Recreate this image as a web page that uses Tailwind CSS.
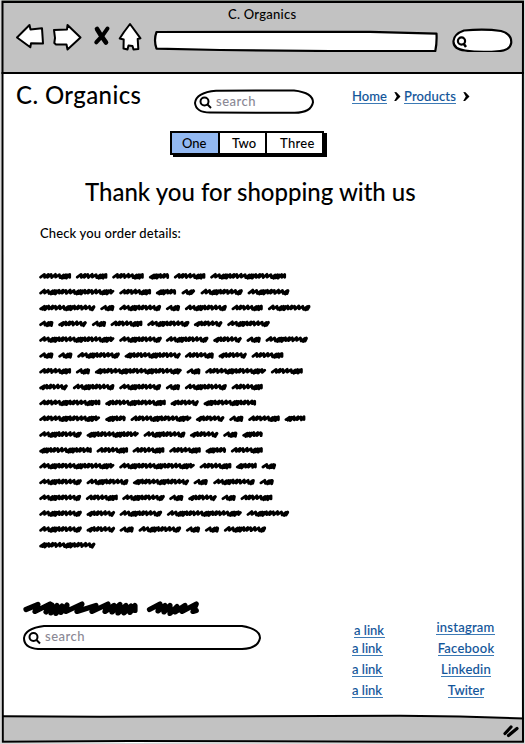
<!DOCTYPE html>
<html lang="en">
<head>
<meta charset="utf-8">
<title>C. Organics</title>
<script src="https://cdn.jsdelivr.net/npm/@tailwindcss/browser@4"></script>
</head>
<body class="bg-white">
<div class="relative flex flex-col w-[525px] h-[744px] overflow-hidden bg-white text-black font-['Lato','Open_Sans',sans-serif] font-medium text-[13px] leading-[18px]">

  <!-- browser chrome -->
  <header class="flex flex-col h-[74px] shrink-0 bg-[#c2c2c2] border-b-2 border-black">
    <div class="h-[22px] pt-[5px] pl-[228px] tracking-[0.25px]">C. Organics</div>
    <div class="flex items-start pl-[15px]">
      <svg class="w-[30px] h-[30px] shrink-0" viewBox="15 22 30 30" fill="#fff" stroke="#000" stroke-width="2" stroke-linejoin="round"><path d="M17 37.5 L29.5 25 L30.5 29.5 L42 28.3 L43 43.5 L31 43.3 L30.3 47.3 Z"/></svg>
      <svg class="w-[32px] h-[30px] ml-[6px] shrink-0" viewBox="51 22 32 30" fill="#fff" stroke="#000" stroke-width="2" stroke-linejoin="round"><path d="M54 30 L67 29.5 L67.500 25 L80.500 37.500 L67.500 49.500 L66.500 44.500 L56 44.500 L54.300 43 L55 38 Z"/></svg>
      <svg class="w-[20px] h-[30px] ml-[9px] shrink-0" viewBox="92 22 20 30" fill="none" stroke="#000" stroke-linejoin="round" stroke-linecap="round"><path d="M97 29 Q101 36 106 42.500" stroke-width="4.600"/><path d="M107.500 28.500 Q103 36 96.300 42.300" stroke-width="4"/></svg>
      <svg class="w-[26px] h-[30px] ml-[6px] shrink-0" viewBox="118 22 26 30" fill="#fff" stroke="#000" stroke-width="2" stroke-linejoin="round"><path d="M130 24 L140.500 38.300 L137.700 39 L138.300 49 L133.500 49.500 L132.500 46 L128.500 45.500 L127.500 49.500 L123.500 48.500 L123.700 39.500 L119.700 38.500 L124 32 Z"/></svg>
      <svg class="w-[290px] h-[30px] ml-[7px] shrink-0" viewBox="151 22 290 30" fill="#fff" stroke="#000" stroke-width="2.200" stroke-linejoin="round"><path d="M156.500 32 L370 31.800 L436.500 33.600 Q437 43 435.300 51 L330 51 L220 50 L156.500 48.700 Q153.500 40 156.500 32 Z"/></svg>
      <svg class="w-[64px] h-[30px] ml-[10px] shrink-0" viewBox="451 26 64 30" fill="#fff" stroke="#000" stroke-width="2.200"><g transform="translate(0 4)"><path d="M464 30.500 Q485 28.500 501 31 Q512 34 511.200 43 Q510 50 500 51 Q481 53 465 50.500 Q453 49 453.500 41 Q454 34 464 30.500 Z"/><circle cx="461.500" cy="41" r="3.600" fill="none" stroke-width="2.200"/><path d="M463.500 43.500 L466 47" stroke-width="2.500"/></g></svg>
    </div>
  </header>

  <main class="flex flex-col h-[642px] shrink-0">
    <!-- site header -->
    <div class="flex items-start h-[57px] shrink-0 pl-[16px]">
      <h1 class="w-[177px] pt-[7px] text-[24px] leading-[28px] tracking-[0.4px] whitespace-nowrap">C. Organics</h1>
      <div class="relative w-[122px] h-[27px] mt-[15px]">
        <svg class="absolute inset-0 w-[122px] h-[27px]" viewBox="193 89 122 27" fill="#fff" stroke="#000" stroke-width="2"><path d="M216 90.700 L294 90.400 Q313 92.500 313 102.300 Q311 113 294 112.800 L210 112.500 Q196 112.500 195 103 Q196 92.500 216 90.700 Z"/><circle cx="204.500" cy="101.500" r="4" fill="none" stroke-width="2"/><path d="M207.500 104.500 L211 108"/></svg>
        <span class="relative block pt-[3px] pl-[23px] tracking-[0.5px] text-[#8a8894]">search</span>
      </div>
      <nav class="flex items-start pt-[13px] pl-[37px] text-[#12559a] [-webkit-text-stroke:0.1px_currentColor]">
        <a class="block h-[17px] leading-[18px] border-b border-[#3c7ab5] w-[35px] whitespace-nowrap">Home</a>
        <svg class="w-[7px] h-[9px] mt-[5px] ml-[7px]" viewBox="0 0 7 9"><path d="M0.300 0 L2.500 0.200 L6.500 4.500 L2 9 L0.200 9 L2.800 4.500 Z"/></svg>
        <a class="block h-[17px] leading-[18px] border-b border-[#3c7ab5] w-[52px] ml-[3px] tracking-[0.15px] whitespace-nowrap">Products</a>
        <svg class="w-[7px] h-[9px] mt-[5px] ml-[7px]" viewBox="0 0 7 9"><path d="M0.300 0 L2.500 0.200 L6.500 4.500 L2 9 L0.200 9 L2.800 4.500 Z"/></svg>
      </nav>
    </div>

    <!-- button bar -->
    <div class="flex h-[24px] shrink-0 w-[154px] ml-[170px] border-2 border-black shadow-[3px_2px_0_#000] leading-[21px] whitespace-nowrap">
      <div class="w-[48px] pl-[10px] bg-[#93b9f2] border-r-2 border-black">One</div>
      <div class="w-[47px] pl-[12px] border-r-2 border-black">Two</div>
      <div class="pl-[13px] tracking-[0.3px]">Three</div>
    </div>

    <h2 class="mt-[22px] ml-[85px] text-[24px] leading-[30px] whitespace-nowrap">Thank you for shopping with us</h2>
    <p class="mt-[17px] ml-[40px] tracking-[0.14px] whitespace-nowrap">Check you order details:</p>

    <svg id="body-copy" class="w-[290px] h-[286px] mt-[26px] ml-[30px] shrink-0" viewBox="30 268 290 286" fill="none" stroke="#000" stroke-width="2.800" stroke-linecap="round" stroke-linejoin="round"></svg>

    <!-- site footer -->
    <div class="flex mt-[44px]">
      <div class="w-[262px] pl-[22px] shrink-0">
        <svg class="w-[178px] h-[20px]" viewBox="22 597.500 178 20" fill="none" stroke="#000" stroke-width="5.200" stroke-linecap="round" stroke-linejoin="round"><path d="M26 609 L38 604 L35 611 L50 603.500 L46 611.500 L52 604.500 L51 612.500 L57 605 L56 613 L62 605.500 L61 612 L67 604.500 L66 611 L82 603.500 L77 611 L96 605 L92 611 L108 603.500 L105 611 L114 605 L112 611.500 L120 604 L118 612.500 L126 605 L124 612.500 L131 605.500 L130 612 L135 605 L135 610"/><path d="M149.500 609 L160 603.500 L158 610.500 L165 605 L164 611.500 L170 605 L170 613 L177 606 L175 611.500 L185 605 L182 611 L196.300 603.500 L193 611 L196.300 610"/></svg>
        <div class="relative w-[240px] h-[27px] mt-[6px]">
          <svg class="absolute inset-0 w-[240px] h-[27px]" viewBox="22 624 240 27" fill="#fff" stroke="#000" stroke-width="2"><path d="M44 626 L242 626 Q260 629 260 638 Q258 648.500 242 649 L38 649 Q24 648 24 638 Q25 628.500 44 626 Z"/><circle cx="33.500" cy="637" r="4" fill="none"/><path d="M36.500 640 L40 643.500"/></svg>
          <span class="relative block pt-[3px] pl-[23px] tracking-[0.5px] text-[#8a8894]">search</span>
        </div>
      </div>
      <div class="flex flex-col pt-[23px] pl-[90px] w-[164px] shrink-0 items-start text-[#12559a] [-webkit-text-stroke:0.1px_currentColor]">
        <a class="block h-[17px] w-[31px] ml-[2px] border-b border-[#3c7ab5]">a link</a>
        <a class="block h-[17px] w-[31px] mt-[1px] border-b border-[#3c7ab5]">a link</a>
        <a class="block h-[17px] w-[31px] mt-[4px] border-b border-[#3c7ab5]">a link</a>
        <a class="block h-[17px] w-[31px] mt-[4px] border-b border-[#3c7ab5]">a link</a>
      </div>
      <div class="flex flex-col pt-[20px] w-[80px] shrink-0 items-center tracking-[0.25px] text-[#12559a] [-webkit-text-stroke:0.1px_currentColor]">
        <a class="block h-[17px] mr-[1px] border-b border-[#3c7ab5]">instagram</a>
        <a class="block h-[17px] mt-[4px] border-b border-[#3c7ab5]">Facebook</a>
        <a class="block h-[17px] mt-[4px] border-b border-[#3c7ab5]">Linkedin</a>
        <a class="block h-[17px] mt-[4px] border-b border-[#3c7ab5] tracking-[0px]">Twiter</a>
      </div>
    </div>
  </main>

  <!-- status bar -->
  <svg class="w-[525px] h-[28px] shrink-0" viewBox="0 716 525 28" overflow="visible"><path d="M3 716.300 L100 716.800 L380 715.800 L460 716.500 L524 718.500 L524 742 L3 742 Z" fill="#c2c2c2"/><path d="M3 716.300 L100 716.800 L400 715.800 L460 716.500 L524 718.500" fill="none" stroke="#000" stroke-width="2"/><path d="M505 733.500 L511 727 M508.500 735.500 L517 728.500" stroke="#000" stroke-width="3.200" stroke-linecap="round"/></svg>

  <!-- hand drawn window outline -->
  <svg class="absolute inset-0 w-[525px] h-[744px] pointer-events-none" viewBox="0 0 525 744" fill="none"><path d="M0 0 H525 V1 H0 Z" fill="#7c807c"/><path d="M0 0 H1.500 V744 H0 Z M524 0 H525 V744 H524 Z M0 743 H525 V744 H0 Z" fill="#d8d8d8"/><path d="M2.500 2 L523 2 L522.500 400 L523 741.800 L400 741.800 L130 741 L2.800 741.800 L2.500 400 Z" stroke="#000" stroke-width="2"/></svg>
</div>

<script>
// Word extents per line, in thirds of a pixel from the left margin.
const LINES = [
  [28,123,138,232,247,341,357,417,432,526,541,768],
  [28,253,268,363,378,438,455,495,512,638,653,778],
  [28,196,211,253,268,393,408,450,465,590,605,698,714,841],
  [28,70,85,170,186,228,242,337,352,478,492,577,592,719],
  [28,253,268,395,408,535,550,635,650,692,707,833],
  [28,70,85,127,142,269,284,452,465,551,566,650,665,760],
  [28,123,138,180,195,455,470,511,526,708,723,818],
  [28,113,129,253,268,393,408,450,465,590,605,698],
  [28,211,226,407,422,506,521,678],
  [28,210,226,287,302,484,498,583,598,640,655,749,764,826],
  [28,155,170,326,341,466,480,565,580,622,637,698],
  [28,185,200,294,308,403,418,512,527,588,603,698],
  [28,253,268,494,509,604,618,680,695,738],
  [28,155,170,295,309,477,491,533,550,674,689,731],
  [28,153,168,263,277,404,418,460,475,560,575,617,632,727],
  [28,155,170,255,269,396,411,635,650,777],
  [28,155,170,255,269,311,326,453,468,510,525,567,582,708],
  [28,196]
];
const STEPS = [2.8, 4.3, 3.9, 4.4, 2.1, 1.9, 2.4, 4];
const DIPS = [0, 0.3, -0.2, 0.5, 1.2, 0.6, 1.1, 0.1];
let d = '';
LINES.forEach((line, i) => {
  const y = 276.2 + i * 15.82;
  for (let w = 0; w < line.length; w += 2) {
    const a = 30 + line[w] / 3 + 1.3, b = 30 + line[w + 1] / 3 - 1.3;
    let x = a, k = Math.round((b - a) / 4);
    d += `M${a} ${y + 1}`;
    while (x < b - 2.5) {
      const e = DIPS[k % 8];
      d += `L${Math.min(x + 3.8, b).toFixed(1)} ${(y - 1.8 + e * 0.5).toFixed(1)}`;
      x += STEPS[k % 8];
      d += `L${Math.min(x, b).toFixed(1)} ${(y + 1.1 + e * 0.8).toFixed(1)}`;
      k++;
    }
    d += `L${b.toFixed(1)} ${y - 0.9}`;
  }
});
document.getElementById('body-copy').innerHTML = `<path d="${d}"/>`;
</script>
</body>
</html>
